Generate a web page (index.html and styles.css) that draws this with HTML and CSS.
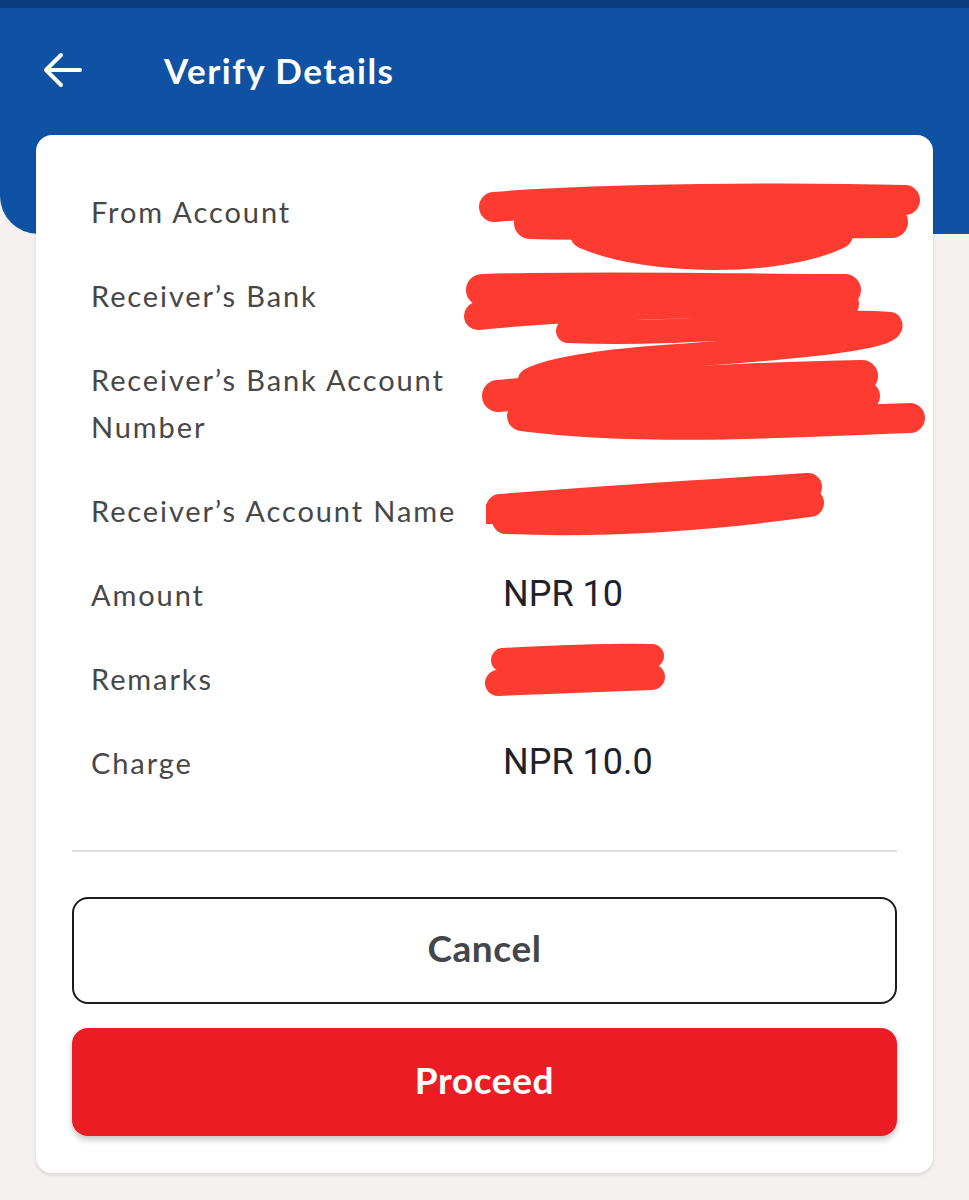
FILE: index.html
```html
<!DOCTYPE html>
<html lang="en">
<head>
<meta charset="utf-8">
<title>Verify Details</title>
<link rel="stylesheet" href="styles.css">
</head>
<body>
<header class="topbar">
  <div class="bar-row">
    <button class="back" aria-label="Back">
      <svg width="40" height="36" viewBox="0 0 40 36" fill="none" stroke="#fff" stroke-width="4" stroke-linecap="round" stroke-linejoin="round">
        <path d="M37 18H4"/>
        <path d="M18 3L3 18L18 33"/>
      </svg>
    </button>
    <h1 class="title">Verify Details</h1>
  </div>
</header>
<main class="card">
  <div class="details">
    <div class="label">From Account</div><div class="value"></div>
    <div class="label">Receiver’s Bank</div><div class="value"></div>
    <div class="label">Receiver’s Bank Account Number</div><div class="value"></div>
    <div class="label">Receiver’s Account Name</div><div class="value"></div>
    <div class="label">Amount</div><div class="value">NPR 10</div>
    <div class="label">Remarks</div><div class="value"></div>
    <div class="label">Charge</div><div class="value">NPR 10.0</div>
  </div>
  <hr class="divider">
  <div class="actions">
    <button class="btn btn-cancel">Cancel</button>
    <button class="btn btn-proceed">Proceed</button>
  </div>
  <svg class="redact" width="897" height="620" viewBox="0 0 897 620" fill="none" stroke="#fd3b30" stroke-linecap="round" stroke-linejoin="round" aria-hidden="true">
    <g transform="translate(-36,-135)">
      <path d="M494 207 C600 198, 800 197, 905 200" stroke-width="30"/>
      <path d="M530 223 C650 226, 800 222, 892 222" stroke-width="32"/>
      <path d="M585 234 C650 262, 780 262, 838 234" stroke-width="30"/>
      <path d="M620 240 L800 240" stroke-width="20"/>
      <path d="M482 290 C600 286, 750 290, 845 290" stroke-width="32"/>
      <path d="M478 316 C600 304, 750 302, 845 304" stroke-width="28"/>
      <path d="M568 331 C700 336, 820 318, 890 324 C900 340, 760 350, 650 358 C580 364, 545 372, 530 380" stroke-width="24"/>
      <path d="M498 396 C600 386, 750 378, 862 376" stroke-width="32"/>
      <path d="M550 404 C700 400, 800 396, 866 396" stroke-width="28"/>
      <path d="M522 416 C650 432, 800 422, 910 418" stroke-width="30"/>
      <path d="M500 508 C600 500, 700 494, 808 487" stroke-width="28"/>
      <path d="M506 520 C600 524, 700 518, 810 503" stroke-width="28"/>
      <path d="M486 514 L500 514" stroke-width="20" stroke-linecap="butt"/>
      <path d="M503 660 C560 657, 610 655, 652 656" stroke-width="24"/>
      <path d="M498 683 C560 681, 610 679, 652 677" stroke-width="26"/>
    </g>
  </svg>
</main>
</body>
</html>
```
FILE: styles.css
```css
* { box-sizing: border-box; }

html, body {
  margin: 0;
  padding: 0;
}

body {
  background: #f5f1f0;
  font-family: Lato, "Noto Sans", sans-serif;
  width: 969px;
  min-height: 1200px;
}

.topbar {
  background: #0f52a3;
  border-top: 8px solid #0b3c7f;
  height: 234px;
  border-bottom-left-radius: 38px;
  padding-top: 39px;
}

.bar-row {
  display: flex;
  align-items: center;
  height: 46px;
}

.back {
  background: none;
  border: 0;
  padding: 0;
  margin-left: 43px;
  width: 40px;
  height: 36px;
  display: flex;
}

.title {
  margin: 0 0 0 81px;
  color: #fff;
  font-family: Lato, sans-serif;
  font-weight: 700;
  font-size: 35px;
  letter-spacing: 1.5px;
  line-height: 46px;
}

.card {
  position: relative;
  margin: -99px 36px 0;
  background: #fff;
  border-radius: 16px;
  box-shadow: 0 2px 4px rgba(0, 0, 0, 0.12);
  padding: 53px 36px 37px;
}

.details {
  display: grid;
  grid-template-columns: 390px 1fr;
  column-gap: 22px;
  row-gap: 37px;
  padding-left: 19px;
}

.label {
  font-size: 29px;
  letter-spacing: 1.9px;
  line-height: 47px;
  color: #474747;
}

.value {
  font-family: Roboto, "Noto Sans", sans-serif;
  font-size: 36px;
  line-height: 47px;
  color: #1f2229;
}

.divider {
  border: 0;
  height: 2px;
  background: #dedede;
  margin: 64px 0 45px;
}

.actions {
  display: flex;
  flex-direction: column;
  gap: 24px;
}

.btn {
  font-family: Lato, sans-serif;
  font-weight: 700;
  font-size: 37px;
  letter-spacing: 0.6px;
  height: 107px;
  border-radius: 16px;
  width: 100%;
  padding: 0 0 6px;
}

.btn-cancel {
  background: #fff;
  border: 2px solid #1c1c1c;
  color: #44464b;
}

.btn-proceed {
  background: #ec1c24;
  border: 0;
  color: #fff;
  height: 108px;
  box-shadow: 0 4px 6px rgba(0, 0, 0, 0.22);
}

.redact {
  position: absolute;
  left: 0;
  top: 0;
  pointer-events: none;
}
```
